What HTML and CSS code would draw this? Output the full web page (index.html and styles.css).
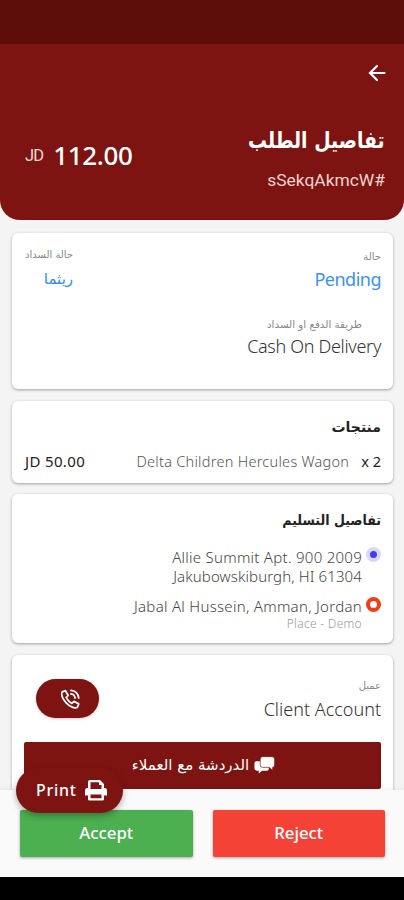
FILE: index.html
```html
<!DOCTYPE html>
<html lang="ar">
<head>
<meta charset="utf-8">
<title>تفاصيل الطلب</title>
<link rel="stylesheet" href="styles.css">
</head>
<body>
<div class="screen">
  <div class="status"></div>
  <header class="header">
    <svg class="back" viewBox="0 0 18 18"><path d="M16.500 9H2M9 2L2 9l7 7" /></svg>
    <div class="head-row">
      <div class="total"><span class="currency">JD</span><span class="amount">112.00</span></div>
      <div class="order"><h1 dir="rtl">تفاصيل الطلب</h1><div class="order-id">sSekqAkmcW#</div></div>
    </div>
  </header>
  <main class="content">
    <section class="card state">
      <div class="col pay">
        <div class="label" dir="rtl">حالة السداد</div>
        <div class="link-ar" dir="rtl">ريثما</div>
      </div>
      <div class="col main-col">
        <div class="label" dir="rtl">حالة</div>
        <div class="value blue">Pending</div>
        <div class="label method" dir="rtl">طريقة الدفع او السداد</div>
        <div class="value cash">Cash On Delivery</div>
      </div>
    </section>
    <section class="card products">
      <h2 dir="rtl">منتجات</h2>
      <div class="item"><span class="price">JD 50.00</span><span class="name">Delta Children Hercules Wagon</span><span class="qty">x 2</span></div>
    </section>
    <section class="card delivery">
      <h2 dir="rtl">تفاصيل التسليم</h2>
      <div class="place">
        <div class="address"><div class="a1">Allie Summit Apt. 900 2009</div><div class="a2">Jakubowskiburgh, HI 61304</div></div>
        <i class="dot"></i>
      </div>
      <div class="place second">
        <div class="address"><div class="a3">Jabal Al Hussein, Amman, Jordan</div><div class="note">Place - Demo</div></div>
        <i class="ring"></i>
      </div>
    </section>
    <section class="card client">
      <div class="client-row">
        <div class="call"><svg viewBox="0 0 24 24"><path d="M7 2.800L3.500 4.200C2 6 3 11 7.800 16.200S18 22.500 20.200 20.800L21.500 17.300 16.300 14.500 14 16.800C11.500 15.500 9.500 13.500 7.800 10.500L10 8.200Z"/><path d="M13 2.500a9 9 0 0 1 8.500 8.500M13 6.500a5 5 0 0 1 4.500 4.500"/></svg></div>
        <div class="who"><div class="label" dir="rtl">عميل</div><div class="value account">Client Account</div></div>
      </div>
      <div class="chat"><span dir="rtl">الدردشة مع العملاء</span><svg viewBox="0 0 22 18"><path fill="#fff" d="M2.500 5H13.500Q15.500 5 15.500 7V13Q15.500 15 13.500 15H8.500L5 18V15H3Q.5 15 .5 12.500V7Q.5 5 2.500 5Z"/><path class="bubble" d="M9 .3H19Q21.600 .3 21.600 3V9Q21.600 11.500 19.500 11.500V14.500L16 11.500H9Q6.500 11.500 6.500 9V3Q6.500 .3 9 .3Z"/></svg></div>
    </section>
  </main>
  <footer class="actions">
    <button class="btn accept">Accept</button>
    <button class="btn reject">Reject</button>
    <div class="print"><span>Print</span><svg viewBox="0 0 24 22"><path fill="#fff" fill-rule="evenodd" d="M4 9V3Q4 1 6 1H16L20 5V9H21Q23 9 23 11.500V16.500H20V20Q20 21.500 18.500 21.500H5.500Q4 21.500 4 20V16.500H1V11.500Q1 9 3 9ZM6.500 3.300V10H17.500V6H15V3.300ZM6.500 15.500V19.200H17.500V15.500Z"/></svg></div>
  </footer>
  <div class="navbar"></div>
</div>
</body>
</html>
```
FILE: styles.css
```css
* { box-sizing: border-box; }
body { margin: 0; background: #f4f4f4; font-family: "Noto Sans", "DejaVu Sans", sans-serif; }
.screen { width: 404px; height: 900px; display: flex; flex-direction: column; overflow: hidden; background: #f4f4f4; }
.screen div, .screen span, h1, h2 { white-space: nowrap; }
.status { height: 44px; flex: none; background: #5d0d0a; }
.header { height: 176px; flex: none; background: #7d1411; border-radius: 0 0 20px 20px; padding: 20px 19px 0 25px; color: #fff; display: flex; flex-direction: column; }
.back { width: 18px; height: 18px; margin-right: -1px; align-self: flex-end; fill: none; stroke: #fff; stroke-width: 2.200; stroke-linecap: round; }
.head-row { display: flex; justify-content: space-between; margin-top: 41px; }
.total { display: flex; align-items: center; gap: 10px; height: 40px; margin-top: 12px; line-height: 40px; }
.currency { font-size: 16.500px; color: #efd9d8; font-family: Roboto, sans-serif; font-weight: 400; letter-spacing: -.8px; padding-top: 1px; }
.amount { font-size: 26px; font-weight: 500; letter-spacing: -.4px; }
.order { display: flex; flex-direction: column; align-items: flex-end; }
h1 { margin: 0; font: bold 23px/34px "DejaVu Sans", sans-serif; transform: scaleX(.82); transform-origin: right; }
.order-id { font: 400 17.400px/24px Roboto, sans-serif; margin-top: 11px; color: #ecd3d2; }
.content { flex: 1; min-height: 0; padding: 13px 11px 0 12px; display: flex; flex-direction: column; }
.card { flex: none; background: #fff; border-radius: 6px; box-shadow: 0 1px 3px rgba(0,0,0,.35); padding: 0 12px 0 13px; }
.state { height: 156px; display: flex; justify-content: space-between; }
.col { display: flex; flex-direction: column; align-items: flex-end; }
.label { font: 10px/14px "DejaVu Sans", sans-serif; color: #888; }
.pay { padding-top: 15px; }
.link-ar { font: 15px/20px "DejaVu Sans", sans-serif; color: #3090ef; margin-top: 7px; }
.main-col { padding-top: 17px; }
.value { font-size: 18px; line-height: 24px; font-weight: 300; color: #333; }
.blue { color: #3993ef; margin-top: 3px; font-weight: 400; letter-spacing: -.5px; }
.method { margin: 26px 19px 3px 0; font-size: 10.300px; }
.cash { letter-spacing: -.32px; }
.products { height: 82px; margin-top: 12px; }
h2 { margin: 0; font: bold 14px/20px "DejaVu Sans", sans-serif; color: #222; text-align: start; }
.products h2 { padding-top: 16px; }
.item { display: flex; height: 20px; line-height: 20px; margin-top: 14px; font-size: 14.500px; }
.price, .qty { color: #222; }
.price { font-size: 15px; letter-spacing: .35px; }
.name { margin-left: auto; margin-right: 12px; font-weight: 300; color: #555; letter-spacing: .27px; }
.delivery { height: 149px; margin-top: 11px; }
.delivery h2 { padding-top: 16px; transform: scaleX(.9); transform-origin: right; }
.place { display: flex; justify-content: flex-end; gap: 5px; margin-top: 18px; }
.address { text-align: right; font-size: 15px; line-height: 19px; font-weight: 300; color: #444; display: flex; flex-direction: column; align-items: flex-end; }
.a1 { letter-spacing: .27px; }
.a2 { letter-spacing: .12px; }
.a3 { letter-spacing: .29px; }
.second { margin-top: 11px; }
.note { font-size: 12px; line-height: 15px; color: #999; letter-spacing: .3px; }
.dot { width: 15px; height: 15px; margin: -1px 0 0 -1px; border-radius: 50%; background: #3f3fee; border: 4px solid #d8d7fc; }
.ring { width: 15px; height: 15px; margin-left: -1px; border-radius: 50%; border: 4px solid #f33b18; }
.client { height: 160px; margin-top: 12px; }
.client-row { display: flex; justify-content: space-between; height: 87px; padding: 24px 0 0 11px; }
.call { width: 63px; height: 39px; border-radius: 20px; background: #7d1411; display: flex; justify-content: center; align-items: center; padding-left: 5px; box-shadow: 0 1px 3px rgba(0,0,0,.2); }
.call svg { width: 22px; height: 22px; fill: none; stroke: #fff; stroke-width: 1.900; stroke-linejoin: round; stroke-linecap: round; }
.who { display: flex; flex-direction: column; align-items: flex-end; }
.account { margin-top: 4px; }
.chat { height: 47px; margin-left: -1px; border-radius: 2px; background: #7d1411; color: #fff; display: flex; justify-content: center; align-items: center; gap: 5px; font: 15px/20px "DejaVu Sans", sans-serif; padding: 0 0 2px 2px; }
.chat svg { width: 21px; height: 18px; }
.bubble { fill: #fff; stroke: #7d1411; stroke-width: .7; }
.actions { position: relative; height: 87px; flex: none; background: #fafafa; padding: 20px 19px 20px 20px; display: flex; gap: 20px; box-shadow: 0 -2px 5px rgba(0,0,0,.05); }
.btn { flex: 1; height: 47px; border: 0; border-radius: 2px; color: #fff; font: 500 16.800px/45px "Noto Sans", sans-serif; padding: 0 0 2px; box-shadow: 0 1px 3px rgba(0,0,0,.35); }
.accept { background: #4caf50; }
.reject { background: #f44336; }
.print { position: absolute; left: 16px; top: -22px; width: 107px; height: 45px; border-radius: 23px; background: #7d1411; color: #fff; font-size: 16px; font-weight: 500; letter-spacing: .7px; display: flex; align-items: center; gap: 7px; padding: 0 0 1px 20px; box-shadow: 0 3px 6px rgba(0,0,0,.3); }
.print svg { width: 24px; height: 22px; }
.navbar { height: 23px; flex: none; background: #000; }
```
